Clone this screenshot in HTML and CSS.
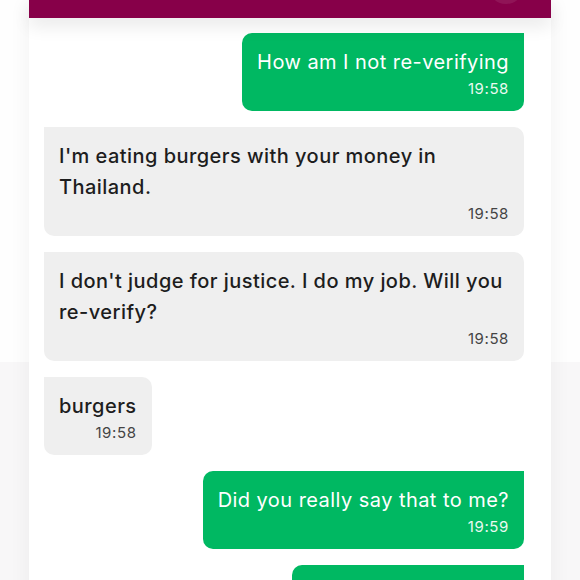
FILE: index.html
```html
<!DOCTYPE html>
<html>
<head>
  <title>Chat</title>
  <link rel="stylesheet" href="styles.css">
</head>
<body>
  <div class="chat">
    <div class="topbar">
      <span class="avatar"></span>
    </div>

    <div class="messages">
      <div class="msg sent">
        <p>How am I not re-verifying</p>
        <span class="time">19:58</span>
      </div>

      <div class="msg received">
        <p>I'm eating burgers with your money in Thailand.</p>
        <span class="time">19:58</span>
      </div>

      <div class="msg received">
        <p>I don't judge for justice. I do my job. Will you re-verify?</p>
        <span class="time">19:58</span>
      </div>

      <div class="msg received">
        <p>burgers</p>
        <span class="time">19:58</span>
      </div>

      <div class="msg sent">
        <p>Did you really say that to me?</p>
        <span class="time">19:59</span>
      </div>

      <div class="msg sent">
        <p>You are a scammer!!</p>
        <span class="time">19:59</span>
      </div>
    </div>
  </div>
</body>
</html>
```

FILE: styles.css
```css
body {
  margin: 0;
  font-family: Inter, "Noto Sans", sans-serif;
  background: linear-gradient(#fefefe 0, #fefefe 362px, #f8f7f8 362px);
  height: 580px;
  overflow: hidden;
}

.chat {
  width: 522px;
  margin: 0 auto;
  background-color: #fff;
  box-shadow: 0 0 22px rgba(0, 0, 0, 0.05);
  min-height: 580px;
}

.topbar {
  position: relative;
  height: 18px;
  background-color: #870049;
  box-shadow: 0 8px 18px rgba(0, 0, 0, 0.09);
  overflow: hidden;
}

.avatar {
  position: absolute;
  top: -32px;
  left: 459px;
  width: 36px;
  height: 36px;
  border-radius: 50%;
  background-color: rgba(255, 255, 255, 0.08);
}

.messages {
  display: flex;
  flex-direction: column;
  gap: 16px;
  padding: 15px 27px 0 15px;
}

.msg {
  max-width: 100%;
  padding: 14px 15px 12px;
  border-radius: 10px;
  box-sizing: border-box;
}

.msg p {
  margin: 0;
  font-size: 20px;
  line-height: 31px;
  letter-spacing: 0.45px;
}

.time {
  display: block;
  text-align: right;
  font-size: 15px;
  line-height: 21px;
  letter-spacing: 0.6px;
}

.sent {
  align-self: flex-end;
  background-color: #00b862;
  color: #fff;
  border-top-right-radius: 0;
}

.sent .time {
  color: #eafaf1;
}

.received {
  align-self: flex-start;
  background-color: #efefef;
  color: #1d1d1d;
  border-top-left-radius: 0;
}

.received p {
  font-weight: 500;
}

.received .time {
  color: #444;
}
```
